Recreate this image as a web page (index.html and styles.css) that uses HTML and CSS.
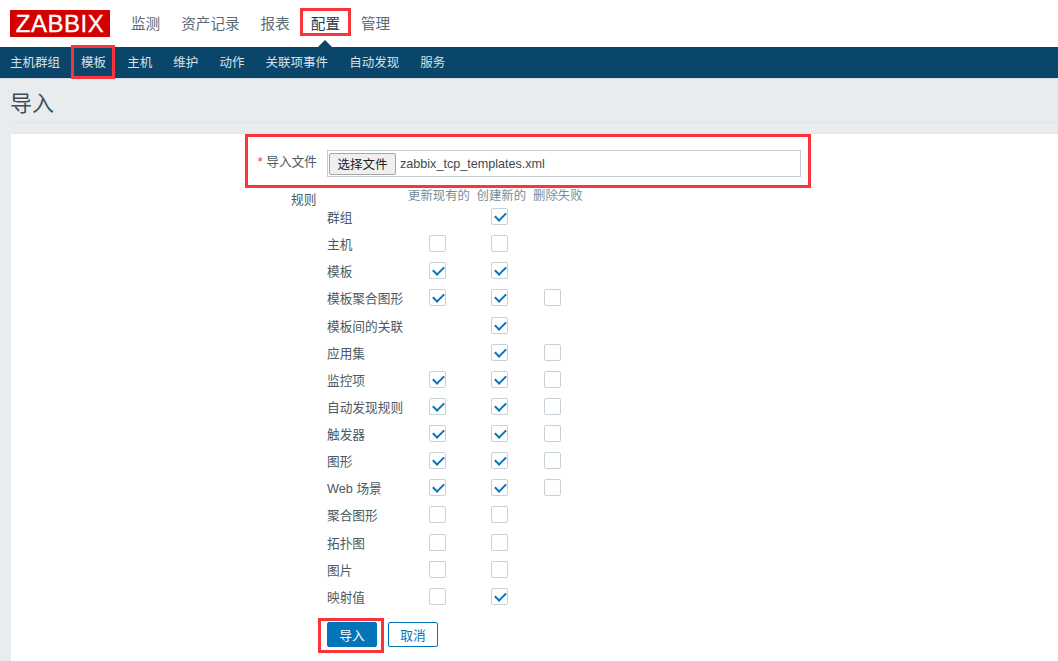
FILE: index.html
```html
<!DOCTYPE html>
<html lang="zh">
<head>
<meta charset="utf-8">
<title>导入</title>
<link rel="stylesheet" href="styles.css">
</head>
<body>
<header class="topbar">
  <div class="logo">ZABBIX</div>
  <nav class="mainnav">
    <a>监测</a><a>资产记录</a><a>报表</a><a class="current">配置</a><a>管理</a>
  </nav>
</header>
<nav class="subnav">
  <a>主机群组</a><a>模板</a><a>主机</a><a>维护</a><a>动作</a><a>关联项事件</a><a>自动发现</a><a>服务</a>
</nav>
<div class="titlebar"><h1>导入</h1></div>
<main class="card">
  <div class="filerow">
    <label class="filelabel"><span class="req">*</span> 导入文件</label>
    <div class="filebox"><button class="choose">选择文件</button><span class="fname">zabbix_tcp_templates.xml</span></div>
  </div>
  <div class="rules">
    <div class="ruleslabel">规则</div>
    <div class="rulegrid">
      <div class="head h1">更新现有的</div><div class="head h2">创建新的</div><div class="head h3">删除失败</div>

      <div class="name">群组</div><span></span><i class="cb on"></i><span></span>
      <div class="name">主机</div><i class="cb"></i><i class="cb"></i><span></span>
      <div class="name">模板</div><i class="cb on"></i><i class="cb on"></i><span></span>
      <div class="name">模板聚合图形</div><i class="cb on"></i><i class="cb on"></i><i class="cb"></i>
      <div class="name">模板间的关联</div><span></span><i class="cb on"></i><span></span>
      <div class="name">应用集</div><span></span><i class="cb on"></i><i class="cb"></i>
      <div class="name">监控项</div><i class="cb on"></i><i class="cb on"></i><i class="cb"></i>
      <div class="name">自动发现规则</div><i class="cb on"></i><i class="cb on"></i><i class="cb"></i>
      <div class="name">触发器</div><i class="cb on"></i><i class="cb on"></i><i class="cb"></i>
      <div class="name">图形</div><i class="cb on"></i><i class="cb on"></i><i class="cb"></i>
      <div class="name">Web 场景</div><i class="cb on"></i><i class="cb on"></i><i class="cb"></i>
      <div class="name">聚合图形</div><i class="cb"></i><i class="cb"></i><span></span>
      <div class="name">拓扑图</div><i class="cb"></i><i class="cb"></i><span></span>
      <div class="name">图片</div><i class="cb"></i><i class="cb"></i><span></span>
      <div class="name">映射值</div><i class="cb"></i><i class="cb on"></i><span></span>
    </div>
  </div>
  <div class="actions">
    <button class="btn primary">导入</button><button class="btn">取消</button>
  </div>
</main>
<div class="mark m1"></div>
<div class="mark m2"></div>
<div class="mark m3"></div>
<div class="mark m4"></div>
</body>
</html>
```
FILE: styles.css
```css
* { box-sizing: border-box; }
html, body { margin: 0; height: 661px; overflow: hidden; }
body {
  background: #e9ecef;
  color: #4b5a63;
  font-family: "Liberation Sans", "Noto Sans CJK SC", sans-serif;
  font-size: 12.7px;
  position: relative;
}
.topbar {
  height: 47px;
  background: #fff;
  display: flex;
  align-items: center;
  padding-left: 10px;
}
.logo {
  width: 100px;
  height: 27px;
  background: #d40000;
  color: #fff;
  font-size: 24px;
  line-height: 28px;
  text-align: center;
  letter-spacing: 0.5px;
  -webkit-text-stroke: 0.3px #fff;
  margin-top: -1px;
}
.mainnav { display: flex; gap: 21px; margin-left: 21px; font-size: 14.6px; color: #5c6b75; margin-top: -3px; }
.mainnav .current { color: #2b3a44; }
.subnav {
  height: 31.5px;
  background: #0a466a;
  border-bottom: 1px solid #d5dde2;
  color: #d7e1e8;
  font-size: 12.5px;
  display: flex;
  align-items: center;
  padding: 0 0 2px 10px;
  gap: 21.1px;
  position: relative;
}
.subnav::before {
  content: "";
  position: absolute;
  left: 318px;
  top: -7px;
  border-left: 7px solid transparent;
  border-right: 7px solid transparent;
  border-bottom: 7px solid #0a466a;
}
.titlebar {
  height: 44px;
  margin: 0 0 10.5px 11px;
  border-bottom: 1px solid #e1e4e7;
  display: flex;
  align-items: center;
}
h1 { margin: 2px 0 0 -1px; font-size: 22px; font-weight: 400; color: #3f4d56; }
.card {
  margin-left: 11px;
  background: #fff;
  height: 528px;
  padding-top: 16px;
  border-top: 1px solid #e3e6e9;
}
.filerow { display: flex; align-items: center; height: 27px; }
.filelabel { width: 306px; text-align: right; margin-top: -7px; }
.req { color: #e33734; }
.filebox {
  margin-left: 10px;
  width: 474px;
  height: 27px;
  border: 1px solid #c2ccd2;
  display: flex;
  align-items: center;
  padding-left: 1px;
}
.choose {
  width: 67px;
  height: 22px;
  padding: 0;
  border: 1px solid #a6a6a6;
  border-radius: 2px;
  background: #efefef;
  color: #222;
  font: 12.5px "Liberation Sans", "Noto Sans CJK SC", sans-serif;
}
.fname { margin-left: 4px; color: #3c4a52; font-size: 12.6px; }
.rules { position: relative; padding-top: 13px; }
.ruleslabel { position: absolute; left: 280px; top: 12px; }
.rulegrid {
  margin-left: 316px;
  display: grid;
  grid-template-columns: 102px 61.5px 53.5px 60px;
  grid-template-rows: 13px;
  grid-auto-rows: 27.14px;
  align-items: center;
}
.rulegrid > .head {
  height: 17px;
  color: #768d99;
  font-size: 12.4px;
  white-space: nowrap;
  line-height: 17px;
}
.head.h1 { grid-column: 1 / span 2; margin-left: 81px; }
.head.h2 { grid-column: 3; margin-left: -14px; }
.head.h3 { grid-column: 4; margin-left: -11px; }
.name { white-space: nowrap; }
.cb {
  display: block;
  width: 17px;
  height: 17px;
  border: 1px solid #c7d2d8;
  border-radius: 2px;
  background: #fff;
  position: relative;
  justify-self: start;
}
.cb.on::after {
  content: "";
  position: absolute;
  left: 3px;
  top: 3px;
  width: 9px;
  height: 5px;
  border-left: 2px solid #0275b8;
  border-bottom: 2px solid #0275b8;
  transform: rotate(-45deg);
}
.actions { margin: 12px 0 0 316px; display: flex; gap: 11px; }
.btn {
  width: 50px;
  height: 25px;
  padding: 0;
  border: 1px solid #0275b8;
  border-radius: 2px;
  background: #fff;
  color: #0275b8;
  font: 12.7px "Liberation Sans", "Noto Sans CJK SC", sans-serif;
}
.btn.primary { background: #0275b8; color: #fff; }
.mark { position: absolute; border: 3px solid #f9343a; pointer-events: none; }
.m1 { left: 300px; top: 8px; width: 51px; height: 28px; }
.m2 { left: 71px; top: 45px; width: 44px; height: 34px; }
.m3 { left: 245px; top: 134px; width: 566px; height: 54px; }
.m4 { left: 318px; top: 618px; width: 66px; height: 35px; }
```
